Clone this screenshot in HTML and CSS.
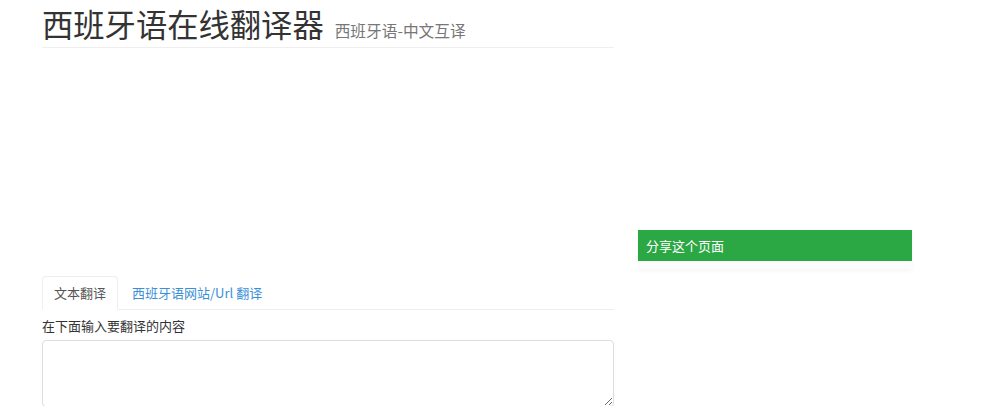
FILE: index.html
```html
<!DOCTYPE html>
<html lang="zh-CN">
<head>
    <meta charset="UTF-8">
    <meta name="viewport" content="width=device-width, initial-scale=1.0">
    <title>西班牙语在线翻译器</title>
    <link rel="stylesheet" href="styles.css">
</head>
<body>
    <div class="page">
        <div class="main-col">
            <!-- Page header -->
            <div class="page-header">
                <h1>西班牙语在线翻译器 <small>西班牙语-中文互译</small></h1>
            </div>

            <!-- Ad slot -->
            <div class="ad-slot"></div>

            <!-- Tabs -->
            <ul class="nav-tabs">
                <li class="active"><a href="#">文本翻译</a></li>
                <li><a href="#">西班牙语网站/Url 翻译</a></li>
            </ul>

            <label for="sourceText" class="input-label">在下面输入要翻译的内容</label>
            <textarea id="sourceText" class="form-control"></textarea>
        </div>

        <div class="side-col">
            <div class="panel">
                <div class="panel-heading">分享这个页面</div>
                <div class="panel-body"></div>
            </div>
        </div>
    </div>
</body>
</html>
```

FILE: styles.css
```css
body {
    margin: 0;
    font-family: "Noto Sans CJK SC", "Liberation Sans", sans-serif;
    font-size: 13px;
    color: #333;
    background: #fff;
}

.page {
    display: grid;
    grid-template-columns: 572px 274px;
    column-gap: 24px;
    padding-left: 42px;
}

.page-header {
    border-bottom: 1px solid #eee;
    padding-bottom: 3px;
}

.page-header h1 {
    margin: 3px 0 0;
    font-size: 31.3px;
    font-weight: 400;
    line-height: 41px;
    color: #333;
}

.page-header small {
    font-size: 15.7px;
    line-height: 1;
    color: #777;
    margin-left: 4px;
}

.ad-slot {
    height: 228px;
}

.nav-tabs {
    display: flex;
    list-style: none;
    margin: 0;
    padding: 0;
    border-bottom: 1px solid #eee;
}

.nav-tabs li {
    margin-bottom: -1px;
    margin-right: 2px;
}

.nav-tabs a {
    display: block;
    padding: 0 11px;
    line-height: 32px;
    color: #3a8fd6;
    text-decoration: none;
    border: 1px solid transparent;
    border-radius: 4px 4px 0 0;
}

.nav-tabs .active a {
    color: #555;
    border-color: #eee #eee transparent;
    background: #fff;
}

.input-label {
    display: block;
    margin-top: 6px;
    line-height: 20px;
}

.form-control {
    display: block;
    box-sizing: border-box;
    width: 100%;
    height: 67px;
    margin-top: 4px;
    border: 1px solid #ddd;
    border-radius: 4px;
    font-family: inherit;
}

.side-col {
    padding-top: 230px;
}

.panel {
    box-shadow: 0 2px 4px rgba(0, 0, 0, 0.04);
}

.panel-heading {
    background: #2ba843;
    color: #fff;
    height: 31px;
    line-height: 31px;
    padding: 0 8px;
    font-size: 13px;
}

.panel-body {
    height: 8px;
    background: #fcfcfc;
}
```
